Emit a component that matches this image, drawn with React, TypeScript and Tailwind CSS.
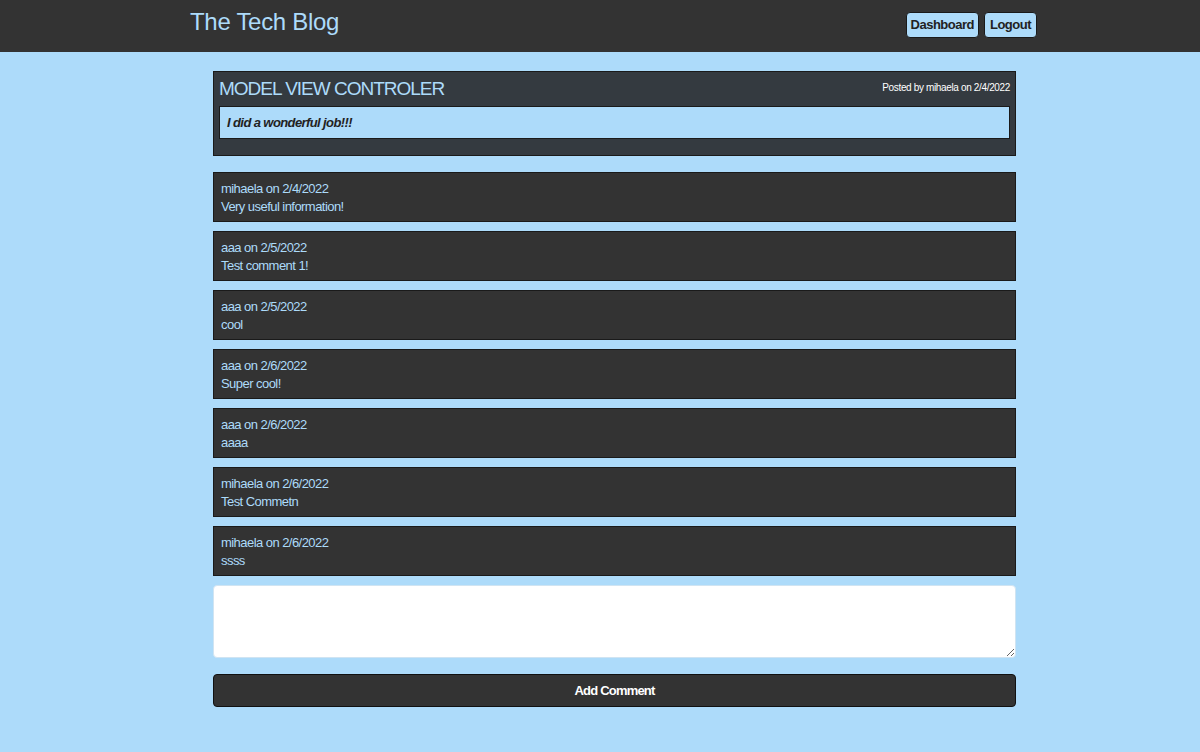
const comments = [
  { user: "mihaela", date: "2/4/2022", text: "Very useful information!" },
  { user: "aaa", date: "2/5/2022", text: "Test comment 1!" },
  { user: "aaa", date: "2/5/2022", text: "cool" },
  { user: "aaa", date: "2/6/2022", text: "Super cool!" },
  { user: "aaa", date: "2/6/2022", text: "aaaa" },
  { user: "mihaela", date: "2/6/2022", text: "Test Commetn" },
  { user: "mihaela", date: "2/6/2022", text: "ssss" },
];

const App = () => {
  return (
    <div className="min-h-[752px] bg-[#addbfa] font-['Liberation_Sans',Arial,sans-serif]">
      <header className="h-[53px] bg-[#333333] border-b border-[#addbfa]">
        <div className="ml-[190px] w-[847px] flex justify-between items-start">
          <h1 className="mt-[7px] text-[24px] leading-[30px] tracking-[-0.3px] text-[#addbfa]">The Tech Blog</h1>
          <nav className="mt-[12px] flex gap-[5px]">
            <button className="h-[26px] px-[4px] rounded-[4px] border border-[#1a1a1a] bg-[#addbfa] text-[13px] font-bold tracking-[-0.5px] text-[#222]">
              Dashboard
            </button>
            <button className="h-[26px] px-[5px] rounded-[4px] border border-[#1a1a1a] bg-[#addbfa] text-[13px] font-bold tracking-[-0.5px] text-[#222]">
              Logout
            </button>
          </nav>
        </div>
      </header>

      <main className="ml-[213px] w-[803px] pt-[18px]">
        <article className="h-[85px] bg-[#343a40] border border-[#1a1a1a] px-[5px] pt-[5px]">
          <div className="flex justify-between items-start">
            <h2 className="text-[19px] leading-[23px] tracking-[-1px] text-[#addbfa]">MODEL VIEW CONTROLER</h2>
            <span className="mt-[3px] text-[10px] tracking-[-0.35px] text-white">Posted by mihaela on 2/4/2022</span>
          </div>
          <div className="mt-[6px] h-[33px] bg-[#addbfa] border border-[#1a1a1a] px-[7px] flex items-center">
            <p className="text-[13px] italic font-bold tracking-[-0.6px] text-[#222]">I did a wonderful job!!!</p>
          </div>
        </article>

        <section className="mt-[16px] flex flex-col gap-[9px]">
          {comments.map((c, i) => (
            <div key={i} className="h-[50px] bg-[#333333] border border-[#1a1a1a] px-[7px] pt-[7px] text-[13px] leading-[18px] tracking-[-0.55px] text-[#addbfa]">
              <p>{c.user} on {c.date}</p>
              <p>{c.text}</p>
            </div>
          ))}
        </section>

        <textarea className="mt-[9px] block w-full h-[73px] bg-white rounded-[4px] border border-[#d0e4f2]" />

        <button className="mt-[16px] w-full h-[33px] rounded-[4px] border border-[#111] bg-[#333333] text-[13px] font-bold tracking-[-0.8px] text-white">
          Add Comment
        </button>
      </main>
    </div>
  );
};

export default App;
